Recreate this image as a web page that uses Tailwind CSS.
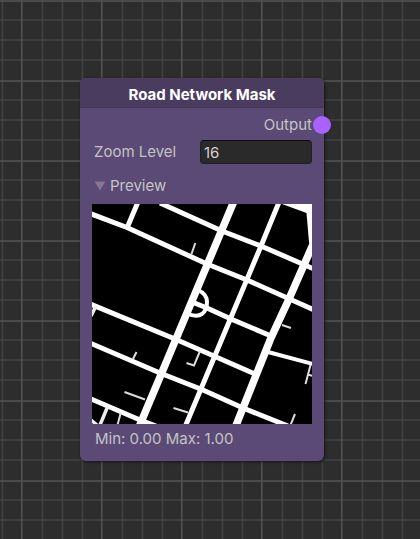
<!DOCTYPE html>
<html lang="en">
<head>
<meta charset="utf-8">
<meta name="viewport" content="width=device-width, initial-scale=1">
<title>Road Network Mask</title>
<script src="https://cdn.jsdelivr.net/npm/@tailwindcss/browser@4"></script>
</head>
<body class="relative min-h-screen overflow-hidden bg-[#2d2d2d] font-['Inter',sans-serif] text-[15px] leading-5 text-[#c4c4c4]">
<svg class="absolute inset-0 h-full w-full" aria-hidden="true">
  <defs>
    <pattern id="grid" x="21" y="0" width="80" height="80" patternUnits="userSpaceOnUse">
      <path d="M21.5 0V80M41.5 0V80M61.5 0V80M0 20H80M0 40H80M0 60H80" stroke="#424242" stroke-width="1.5"/>
      <path d="M.75 0V80M0 1H80" stroke="#535353" stroke-width="1.5"/>
    </pattern>
  </defs>
  <rect width="100%" height="100%" fill="url(#grid)"/>
</svg>
<main class="relative flex justify-center pt-[78px] pr-4">
  <section class="w-[244px] rounded-md bg-[#5b4a75] shadow-[1px_1px_3px_#151515]">
    <h1 class="rounded-t-md border-b border-[#45375a] bg-[#4a3c5f] pt-[7px] pb-0.5 text-center font-bold text-white">Road Network Mask</h1>
    <div class="flex items-center justify-end pt-[7px]">
      <span>Output</span>
      <button type="button" aria-label="Output port" class="-mr-[7px] ml-px size-[18px] rounded-full bg-[#a962ff]"></button>
    </div>
    <div class="flex items-center justify-between pt-[5px] pr-3 pl-3.5">
      <label for="zoom">Zoom Level</label>
      <input id="zoom" type="text" value="16" class="h-6 w-28 rounded border border-[#202020] border-t-[#0d0d0d] bg-[#2a2a2a] px-[3px] text-[#d2d2d2] outline-none">
    </div>
    <div class="px-3 pt-3">
      <button type="button" aria-expanded="true" class="flex items-center gap-1 pl-0.5">
        <svg class="h-3 w-3" viewBox="0 0 12 12" aria-hidden="true"><path d="M.5 1.5h11L6 10.500z" fill="#84778f"/></svg>
        <span>Preview</span>
      </button>
      <svg class="mt-2 block aspect-square w-full bg-black" viewBox="0 0 220 220" fill="none" stroke="#fff" role="img" aria-label="Road network preview">
        <path d="M190 0H220V47L217 38L214.500 9Z" fill="#fff" stroke="none"/>
        <path stroke-width="7.500" d="M142-3L47 223M222 38L197 95L178.500 135L143 224"/>
        <path stroke-width="5" d="M187.500-3L169 42L140 111L93 223M68-1L130 27L169 42L222 65M-2 9.500L35 23.500L115 60L155 76L222 106M46-2L35 24M-2 100L83 135L163 170M-2 139L68 169L111 186L151 204L196 222M-2 194.500L48 216L64 222M100 98L115 104L139 115L179 132"/>
        <path stroke-width="4" d="M176 148L221 160M106 86Q115 90 115 98Q115 106 110 110Q104 114 95 109"/>
        <path stroke-width="2" stroke="#ddd" d="M103.300 39L99.500 50M190 121L199 124M218.500 161L213.500 180M216 170.500L221 172M203 210L198.500 221M44.500 148L41 155M32.500 188L53 195.500M108 147L102 161.500L94.500 159M81.500 204L96 208.500M28.700 209L25.500 221"/>
        <path stroke-width="3.500" stroke="#eee" d="M15.500 203L8 221M4 102L-1 112M-1 216L5 221"/>
      </svg>
      <p class="px-[3px] pt-[5px] pb-3">Min: 0.00 Max: 1.00</p>
    </div>
  </section>
</main>
</body>
</html>
